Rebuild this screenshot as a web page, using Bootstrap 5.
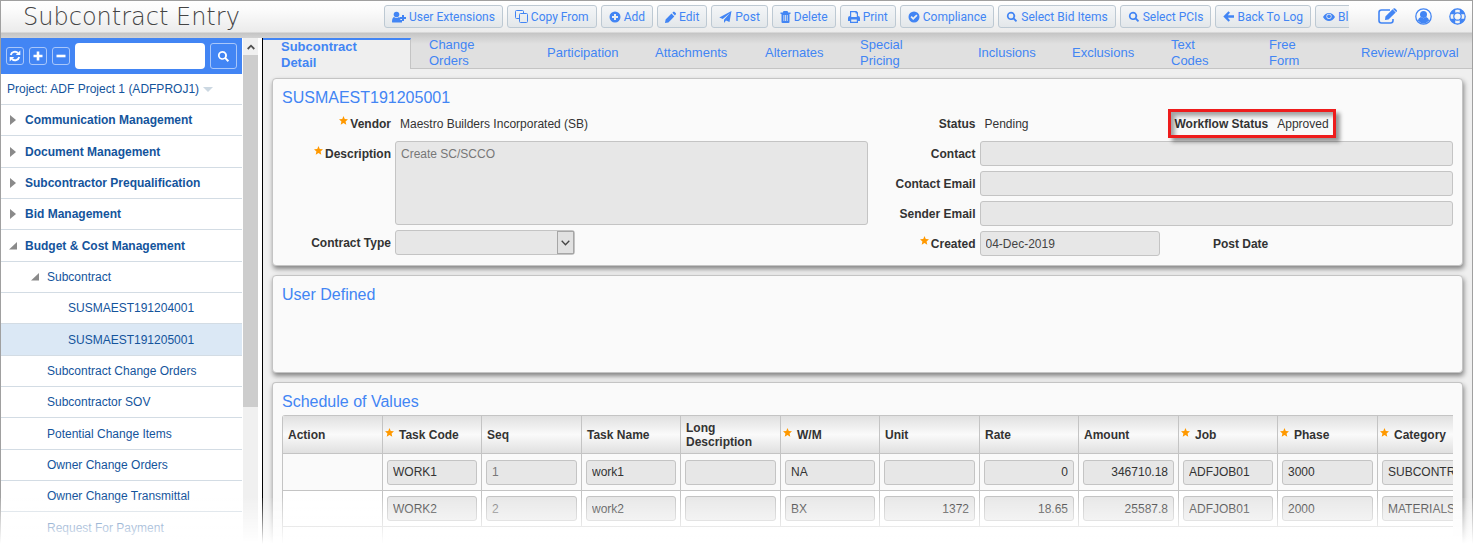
<!DOCTYPE html>
<html lang="en">
<head>
<meta charset="utf-8">
<meta name="viewport" content="width=device-width, initial-scale=1">
<title>Subcontract Entry</title>
<link rel="stylesheet" href="https://cdn.jsdelivr.net/npm/bootstrap@5.3.0/dist/css/bootstrap.min.css">
<style>
  :root { --blue: #4285f4; --line: #c4c4c4; --navy: #14549c; --field: #e7e7e7; }
  body { font: 12px/16px "Liberation Sans", Arial, sans-serif; color: #333; background: #fff; }
  .shell { min-height: 100vh; border: 1px solid #a0a0a0; border-bottom: 0; overflow: hidden; }
  a { text-decoration: none; }
  svg { display: block; flex: none; fill: currentColor; }

  /* header */
  .topbar { height: 37px; padding: 0 6px 6px 22px; color: var(--blue);
    background: linear-gradient(#fff 0, #fcfcfc 8px, #ebebeb 31px, #c4c4c4 32px, #d2d2d2 37px); }
  .app-title { width: 361px; font: 200 24px/30px "DejaVu Sans", sans-serif; color: #444; white-space: nowrap; }
  .actions { gap: 4px; min-width: 0; margin-right: 29px; }
  .actions .btn { display: flex; align-items: center; gap: 3px; height: 23px; padding: 0 7px; flex: none;
    font: 12px/16px Roboto, sans-serif; color: var(--blue); border: 1px solid #bdc9d3; border-radius: 3px;
    background: linear-gradient(#f4f6f8, #e3e7ea); }
  .quick { gap: 17px; }
  .quick a { color: var(--blue); }

  /* project tree */
  .tree { width: 241px; }
  .tree-tools { height: 36px; background: var(--blue); gap: 5px; padding: 0 5px; }
  .tool-btn { display: flex; align-items: center; justify-content: center; width: 18px; height: 18px; padding: 0;
    color: #fff; background: transparent; border: 1px solid #a9c7fa; border-radius: 3px; flex: none; }
  .find-btn { width: 27px; height: 26px; }
  .find-box { min-width: 0; height: 26px; border: 0; border-radius: 4px; background: #fff; }
  .project { height: 31px; padding: 0 6px; color: var(--navy); border-bottom: 1px solid #d3dce4; gap: 4px; }
  .tree ul { margin: 0; padding: 0; list-style: none; }
  .tree li a { display: flex; align-items: center; height: 31px; padding-left: 8px; color: var(--navy);
    border-bottom: 1px solid #d3dce4; }
  .tree li:nth-child(3n+2) a { height: 32px; }
  .tree li svg { width: 8px; margin-right: 8px; color: #8a8a8a; }
  .tree li .lvl1 { font-weight: 700; }
  .tree li .lvl2 { padding-left: 30px; }
  .tree li .leaf2 { padding-left: 46px; }
  .tree li .leaf3 { padding-left: 67px; }
  .tree li .current { background: #dbe8f5; }
  .scroller { width: 16px; background: #f0f0f0; border-left: 1px solid #fff; }
  .scroller .arrow { height: 17px; }
  .scroller .thumb { flex: 352 1 0; background: #cdcdcd; }
  .scroller .track { flex: 141 1 0; }

  /* work area */
  .work { min-width: 0; margin-left: 4px; border-left: 1px solid #000; background: #efefef; }
  .tabs { display: grid; grid-template-columns: 148fr 118fr 108fr 110fr 95fr 118fr 94fr 99fr 98fr 92fr 129fr;
    grid-template-rows: 31px; font-size: 13px; background: linear-gradient(#d2d2d2, #e0e0e0 6px); }
  .tabs a { display: flex; align-items: center; padding: 0 18px; color: var(--blue); border-bottom: 1px solid var(--line); min-width: 0; }
  .tabs a.two { padding-right: 50px; }
  .tabs a.active { font-weight: 700; background: #efefef; border-top: 2px solid var(--blue);
    border-right: 1px solid var(--line); border-bottom: 0; }
  .panels { padding: 9px 9px 0; gap: 9px; }
  .panel { background: #fafafa; border: 1px solid var(--line); border-radius: 4px; padding: 9px;
    box-shadow: 1px 3px 5px rgba(0,0,0,.45); }
  .panel h2 { margin: 0 0 3px; font-size: 16px; line-height: 20px; font-weight: 400; color: var(--blue); }
  .defined { min-height: 98px; }
  .schedule { padding-bottom: 0; border-bottom: 0; border-radius: 4px 4px 0 0; }

  /* detail form */
  .form-cols { display: grid; grid-template-columns: 1fr 1fr; }
  .fields { display: grid; grid-template-columns: 1fr 1fr; row-gap: 5px; align-content: start; }
  .line { display: grid; grid-template-columns: 109px minmax(0, 1fr); column-gap: 4px; align-items: center; min-height: 25px; }
  .status-side .line { grid-template-columns: 108px minmax(0, 1fr); }
  .wide { grid-column: span 2; }
  .line > label, .cap { display: flex; justify-content: end; gap: 2px; font-weight: 700; }
  .star { width: 9px; height: 9px; color: #f90; }
  .plain { padding-left: 5px; }
  .fld { display: block; width: 100%; height: 25px; padding: 0 5px; font: inherit; color: #444;
    background: var(--field); border: 1px solid var(--line); border-radius: 3px; }
  textarea.fld { height: 84px; padding-top: 4px; color: #777; resize: none; }
  .top-label { align-items: start; }
  .top-label > label { padding-top: 5px; }
  .pick { position: relative; }
  .pick select { appearance: none; }
  .pick span { position: absolute; right: 1px; top: 1px; bottom: 1px; width: 17px; display: flex; align-items: center;
    justify-content: center; background: #e1e1e1; border: 1px solid #a6a6a6; pointer-events: none; color: #444; }
  .flagged { position: relative; }
  .flagged::after { content: ""; position: absolute; left: 8px; top: -2px; width: 168px; height: 29px;
    border: 3px solid #ee1c1c; box-shadow: 4px 4px 4px rgba(0,0,0,.4), inset 4px 4px 4px rgba(0,0,0,.35); pointer-events: none; }

  /* schedule grid */
  .grid-wrap { overflow: hidden; border-left: 1px solid var(--line); border-radius: 3px 0 0 0; background: #fff; }
  .sov { table-layout: fixed; width: 1194px; border-collapse: separate; border-spacing: 0; }
  .sov col:nth-child(odd) { width: 100px; }
  .sov col:nth-child(even) { width: 99px; }
  .sov th, .sov td { border-right: 1px solid var(--line); border-bottom: 1px solid var(--line); padding: 0 4px 0 5px; }
  .sov td { padding-left: 4px; }
  .sov th { height: 39px; line-height: 14px; border-top: 1px solid var(--line);
    background: linear-gradient(#e0e0e0, #fafafa 50%, #e0e0e0); }
  .sov th.req { padding-left: 2px; }
  .sov th.req > div { display: flex; gap: 5px; }
  .sov td { height: 37px; }
  .sov tr.first td { background: #fafafa; }
  .sov tr.second td { height: 36px; }
  .sov tr.rest td { height: 20px; border-bottom: 0; }
  .sov tr.rest td + td { border-right: 0; }
  .sov .fld { color: #333; }
  .sov .fld.dim { color: #777; }
  .fadeout { position: fixed; left: 0; right: 0; bottom: 0; height: 50px; pointer-events: none;
    background: linear-gradient(rgba(255,255,255,.08), #fff 46px); }
</style>
<script src="https://cdn.jsdelivr.net/npm/bootstrap@5.3.0/dist/js/bootstrap.bundle.min.js"></script>
</head>
<body>
<svg class="d-none" aria-hidden="true">
  <symbol id="star" viewBox="0 0 10 10"><path d="M5 0l1.4 3.3 3.6.3-2.7 2.4.8 3.6L5 7.7 1.9 9.6l.8-3.6L0 3.6l3.6-.3z"/></symbol>
  <symbol id="closed" viewBox="0 0 8 10"><path d="M1 0l6 5-6 5z"/></symbol>
  <symbol id="open" viewBox="0 0 8 10"><path d="M8 1v7.500H0z"/></symbol>
  <symbol id="search" viewBox="0 0 14 14"><path d="M5.800 1a4.800 4.800 0 1 0 2.700 8.800l3 3 1.500-1.500-3-3A4.800 4.800 0 0 0 5.800 1zm0 2a2.900 2.900 0 1 1 0 5.800 2.900 2.900 0 0 1 0-5.800z"/></symbol>
</svg>
<div class="shell d-flex flex-column">
  <header class="topbar d-flex align-items-center">
    <h1 class="app-title m-0 flex-shrink-0">Subcontract Entry</h1>
    <div class="actions d-flex flex-grow-1 overflow-hidden">
      <button class="btn" type="button"><svg width="14" height="12" viewBox="0 0 14 12"><circle cx="4.500" cy="3.500" r="2.800"/><path d="M0 11c0-3 .8-4.800 2-5 1.500 1.300 3.500 1.300 5 0 .5.200 1 .6 1.300 1.200V9H10v2.500H1Q0 11.500 0 11z"/><path d="M10 4h2v2h2v2h-2v2h-2V8H8V6h2z"/></svg>User Extensions</button>
      <button class="btn" type="button"><svg width="13" height="13" viewBox="0 0 13 13"><path d="M8.500 3V1.500q0-1-1-1h-6q-1 0-1 1v6q0 1 1 1H4" fill="none" stroke="currentColor"/><rect x="4.500" y="3.500" width="8" height="9" rx="1" fill="none" stroke="currentColor"/></svg>Copy From</button>
      <button class="btn" type="button"><svg width="12" height="12" viewBox="0 0 12 12"><path fill-rule="evenodd" d="M6 .5a5.500 5.500 0 1 0 0 11 5.500 5.500 0 0 0 0-11zM5 3h2v2h2v2H7v2H5V7H3V5h2z"/></svg>Add</button>
      <button class="btn" type="button"><svg width="11" height="12" viewBox="0 0 11 12"><path d="M0 12l.6-3.400 5.900-6 2.800 2.800-5.900 6zM7.300 1.800l.9-.9q.7-.7 1.400 0l1.100 1.200q.7.700 0 1.400l-.8.900z"/></svg>Edit</button>
      <button class="btn" type="button"><svg width="13" height="12" viewBox="0 0 13 12"><path d="M12.500 0l-2 11-3.500-1.500L5 12V8.800L11 2 3.800 8 .3 6.500z"/></svg>Post</button>
      <button class="btn" type="button"><svg width="11" height="12" viewBox="0 0 10 12"><path fill-rule="evenodd" d="M3 0h4l.7 1.500H10V3H9v8q0 1-1 1H2q-1 0-1-1V3H0V1.500h2.300zM3 4v6h.8V4zm1.700 0v6h.8V4zm1.600 0v6h.8V4z"/></svg>Delete</button>
      <button class="btn" type="button"><svg width="12" height="12" viewBox="0 0 12 12"><path fill-rule="evenodd" d="M2 0h6.500L10 1.500V5q2 0 2 2v3h-2v2H2v-2H0V7q0-2 2-2zm1.200 1.200V6h5.600V2.500H7.500V1.200zM3.200 8.500v2.300h5.600V8.500z"/></svg>Print</button>
      <button class="btn" type="button"><svg width="12" height="12" viewBox="0 0 12 12"><path fill-rule="evenodd" d="M6 .5a5.500 5.500 0 1 0 0 11 5.500 5.500 0 0 0 0-11zM5.200 9L2.500 6.300l1.200-1.200 1.500 1.500 3.100-3.100 1.200 1.200z"/></svg>Compliance</button>
      <button class="btn" type="button"><svg width="12" height="12"><use href="#search"/></svg>Select Bid Items</button>
      <button class="btn" type="button"><svg width="12" height="12"><use href="#search"/></svg>Select PCIs</button>
      <button class="btn" type="button"><svg width="11" height="11" viewBox="0 0 11 11"><path d="M5.500.3L7 1.800 4.800 4.200H11v2.600H4.800L7 9.200l-1.500 1.500L.3 5.500z"/></svg>Back To Log</button>
      <button class="btn" type="button"><svg width="12" height="10" viewBox="0 0 13 10"><path fill-rule="evenodd" d="M0 5q2.500-4.200 6.500-4.200T13 5q-2.500 4.200-6.500 4.200T0 5zm3.700-.7a2.800 2.800 0 1 0 5.600 0 2.800 2.800 0 0 0-5.600 0z"/><circle cx="6.500" cy="4.300" r="2"/></svg>Bl</button>
    </div>
    <nav class="quick d-flex align-items-center">
      <a href="#" aria-label="Compose"><svg width="20" height="17" viewBox="0 0 20 17"><path d="M12 2H3.500Q1 2 1 4.500v8Q1 15 3.500 15h9q2.500 0 2.500-2.500V11" fill="none" stroke="currentColor" stroke-width="1.600"/><path d="M7 12l.4-3.500 7.200-7.200 3.100 3.100-7.200 7.200zM15.500.6q.8-.8 1.600 0l1.500 1.500q.8.800 0 1.600l-.5.400L15 1z"/></svg></a>
      <a href="#" aria-label="Profile"><svg width="17" height="17" viewBox="0 0 17 17"><circle cx="8.500" cy="8.500" r="7.700" fill="none" stroke="currentColor" stroke-width="1.300"/><circle cx="8.500" cy="6.500" r="3.500"/><path d="M2.800 12.500q.8-3 3-3.500 2.700 2.300 5.400 0 2.200.5 3 3.500-5.700 6-11.400 0z"/></svg></a>
      <a href="#" aria-label="Help"><svg width="17" height="17" viewBox="0 0 17 17" fill="none"><circle cx="8.500" cy="8.500" r="5.700" fill="none" stroke="currentColor" stroke-width="4"/><path d="M8.500 1.200v3.600M8.500 12.200v3.600M1.200 8.500h3.600M12.200 8.500h3.600" stroke="#f3f3f3" stroke-width="4.500"/><circle cx="8.500" cy="8.500" r="7.700" fill="none" stroke="currentColor" stroke-width="1.200"/><circle cx="8.500" cy="8.500" r="3.700" fill="none" stroke="currentColor" stroke-width="1.200"/></svg></a>
    </nav>
  </header>

  <div class="d-flex flex-grow-1">
    <aside class="tree flex-shrink-0">
      <div class="tree-tools d-flex align-items-center">
        <button class="tool-btn" type="button" aria-label="Refresh"><svg width="12" height="12" viewBox="0 0 12 12"><path d="M1.800 5A4.300 4.300 0 0 1 9 3M10.200 7A4.300 4.300 0 0 1 3 9" fill="none" stroke="currentColor" stroke-width="1.900"/><path d="M11.300.5V5H6.800zM.7 11.500V7h4.500z"/></svg></button>
        <button class="tool-btn" type="button" aria-label="Expand all"><svg width="10" height="10" viewBox="0 0 10 10"><path d="M3.700.5h2.600v3.200h3.200v2.600H6.300v3.200H3.700V6.300H.5V3.700h3.200z"/></svg></button>
        <button class="tool-btn" type="button" aria-label="Collapse all"><svg width="10" height="10" viewBox="0 0 10 10"><path d="M.5 3.700h9v2.600h-9z"/></svg></button>
        <input class="find-box flex-grow-1" type="text" aria-label="Find in tree">
        <button class="tool-btn find-btn" type="button" aria-label="Search"><svg width="13" height="13"><use href="#search"/></svg></button>
      </div>
      <a class="project d-flex align-items-center" href="#">Project: ADF Project 1 (ADFPROJ1)<svg width="10" height="5" viewBox="0 0 10 5" color="#ccd8e2"><path d="M0 0h10L5 5z"/></svg></a>
      <ul>
        <li><a class="lvl1" href="#"><svg height="10"><use href="#closed"/></svg>Communication Management</a></li>
        <li><a class="lvl1" href="#"><svg height="10"><use href="#closed"/></svg>Document Management</a></li>
        <li><a class="lvl1" href="#"><svg height="10"><use href="#closed"/></svg>Subcontractor Prequalification</a></li>
        <li><a class="lvl1" href="#"><svg height="10"><use href="#closed"/></svg>Bid Management</a></li>
        <li><a class="lvl1" href="#"><svg height="10"><use href="#open"/></svg>Budget &amp; Cost Management</a></li>
        <li><a class="lvl2" href="#"><svg height="10"><use href="#open"/></svg>Subcontract</a></li>
        <li><a class="leaf3" href="#">SUSMAEST191204001</a></li>
        <li><a class="leaf3 current" href="#">SUSMAEST191205001</a></li>
        <li><a class="leaf2" href="#">Subcontract Change Orders</a></li>
        <li><a class="leaf2" href="#">Subcontractor SOV</a></li>
        <li><a class="leaf2" href="#">Potential Change Items</a></li>
        <li><a class="leaf2" href="#">Owner Change Orders</a></li>
        <li><a class="leaf2" href="#">Owner Change Transmittal</a></li>
        <li><a class="leaf2" href="#">Request For Payment</a></li>
      </ul>
    </aside>
    <div class="scroller d-flex flex-column flex-shrink-0" aria-hidden="true">
      <div class="arrow d-flex align-items-center justify-content-center"><svg width="8" height="6" viewBox="0 0 8 6"><path d="M.7 5L4 1.700 7.300 5" fill="none" stroke="#505050" stroke-width="1.800"/></svg></div>
      <div class="thumb"></div><div class="track"></div>
    </div>

    <main class="work d-flex flex-column flex-grow-1">
      <nav class="tabs">
        <a class="active two" href="#">Subcontract Detail</a>
        <a class="two" href="#">Change Orders</a>
        <a href="#">Participation</a>
        <a href="#">Attachments</a>
        <a href="#">Alternates</a>
        <a class="two" href="#">Special Pricing</a>
        <a href="#">Inclusions</a>
        <a href="#">Exclusions</a>
        <a href="#">Text<br>Codes</a>
        <a href="#">Free<br>Form</a>
        <a href="#">Review/Approval</a>
      </nav>
      <div class="panels d-flex flex-column flex-grow-1">
        <section class="panel">
          <h2>SUSMAEST191205001</h2>
          <div class="form-cols">
            <div class="fields">
              <div class="line wide"><span class="cap"><svg class="star"><use href="#star"/></svg>Vendor</span><span class="plain">Maestro Builders Incorporated (SB)</span></div>
              <div class="line wide top-label"><label for="desc"><svg class="star"><use href="#star"/></svg>Description</label><textarea class="fld" id="desc" readonly>Create SC/SCCO</textarea></div>
              <div class="line"><label for="ctype">Contract Type</label><div class="pick"><select class="fld" id="ctype"><option></option></select><span><svg width="9" height="6" viewBox="0 0 9 6"><path d="M.7.700l3.800 4 3.800-4" fill="none" stroke="currentColor" stroke-width="1.300"/></svg></span></div></div>
            </div>
            <div class="fields status-side">
              <div class="line"><span class="cap">Status</span><span class="plain">Pending</span></div>
              <div class="line flagged"><span class="cap">Workflow Status</span><span class="plain">Approved</span></div>
              <div class="line wide"><label for="contact">Contact</label><input class="fld" id="contact" type="text" readonly></div>
              <div class="line wide"><label for="cmail">Contact Email</label><input class="fld" id="cmail" type="text" readonly></div>
              <div class="line wide"><label for="smail">Sender Email</label><input class="fld" id="smail" type="text" readonly></div>
              <div class="line"><label for="made"><svg class="star"><use href="#star"/></svg>Created</label><input class="fld" id="made" type="text" value="04-Dec-2019" readonly></div>
              <div class="line"><span class="cap">Post Date</span><span></span></div>
            </div>
          </div>
        </section>
        <section class="panel defined"><h2>User Defined</h2></section>
        <section class="panel schedule flex-grow-1 d-flex flex-column">
          <h2>Schedule of Values</h2>
          <div class="grid-wrap flex-grow-1">
            <table class="sov">
              <colgroup><col><col><col><col><col><col><col><col><col><col><col><col></colgroup>
              <thead><tr>
                <th>Action</th>
                <th class="req"><div><svg class="star"><use href="#star"/></svg>Task Code</div></th>
                <th>Seq</th><th>Task Name</th><th>Long Description</th>
                <th class="req"><div><svg class="star"><use href="#star"/></svg>W/M</div></th>
                <th>Unit</th><th>Rate</th><th>Amount</th>
                <th class="req"><div><svg class="star"><use href="#star"/></svg>Job</div></th>
                <th class="req"><div><svg class="star"><use href="#star"/></svg>Phase</div></th>
                <th class="req"><div><svg class="star"><use href="#star"/></svg>Category</div></th>
              </tr></thead>
              <tbody>
                <tr class="first"><td></td>
                  <td><input class="fld" aria-label="Task Code" value="WORK1"></td>
                  <td><input class="fld dim" aria-label="Seq" value="1"></td>
                  <td><input class="fld" aria-label="Task Name" value="work1"></td>
                  <td><input class="fld" aria-label="Long Description"></td>
                  <td><input class="fld" aria-label="W/M" value="NA"></td>
                  <td><input class="fld text-end" aria-label="Unit"></td>
                  <td><input class="fld text-end" aria-label="Rate" value="0"></td>
                  <td><input class="fld text-end" aria-label="Amount" value="346710.18"></td>
                  <td><input class="fld" aria-label="Job" value="ADFJOB01"></td>
                  <td><input class="fld" aria-label="Phase" value="3000"></td>
                  <td><input class="fld" aria-label="Category" value="SUBCONTRACT"></td></tr>
                <tr class="second"><td></td>
                  <td><input class="fld" aria-label="Task Code" value="WORK2"></td>
                  <td><input class="fld dim" aria-label="Seq" value="2"></td>
                  <td><input class="fld" aria-label="Task Name" value="work2"></td>
                  <td><input class="fld" aria-label="Long Description"></td>
                  <td><input class="fld" aria-label="W/M" value="BX"></td>
                  <td><input class="fld text-end" aria-label="Unit" value="1372"></td>
                  <td><input class="fld text-end" aria-label="Rate" value="18.65"></td>
                  <td><input class="fld text-end" aria-label="Amount" value="25587.8"></td>
                  <td><input class="fld" aria-label="Job" value="ADFJOB01"></td>
                  <td><input class="fld" aria-label="Phase" value="2000"></td>
                  <td><input class="fld" aria-label="Category" value="MATERIALS"></td></tr>
                <tr class="rest"><td></td><td colspan="11"></td></tr>
              </tbody>
            </table>
          </div>
        </section>
      </div>
    </main>
  </div>
</div>
<div class="fadeout"></div>
</body>
</html>
